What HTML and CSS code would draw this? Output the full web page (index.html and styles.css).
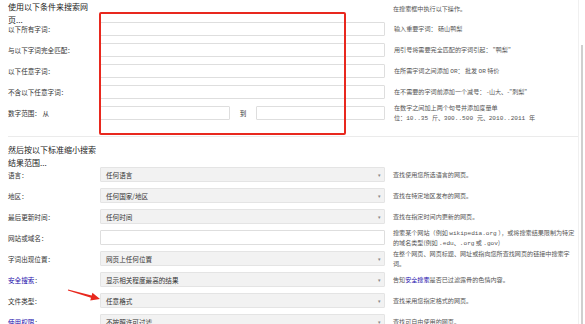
FILE: index.html
```html
<!DOCTYPE html>
<html lang="zh-CN">
<head>
<meta charset="utf-8">
<title>高级搜索</title>
<link rel="stylesheet" href="styles.css">
</head>
<body>
<div class="page">
  <main class="content">
    <section class="block block-terms">
      <div class="block-head">
        <h2 class="block-title">使用以下条件来搜索网页...</h2>
        <div class="head-spacer"></div>
        <div class="hint hint-head">在搜索框中执行以下操作。</div>
      </div>
      <div class="form-grid terms-grid">
        <label class="label">以下所有字词：</label>
        <input class="text-input" type="text">
        <div class="hint hint-item">输入重要字词： 砀山鸭梨</div>

        <label class="label">与以下字词完全匹配：</label>
        <input class="text-input" type="text">
        <div class="hint hint-item">用引号将需要完全匹配的字词引起： "鸭梨"</div>

        <label class="label">以下任意字词：</label>
        <input class="text-input" type="text">
        <div class="hint hint-item">在所需字词之间添加 <span class="mono">OR</span>： 批发 <span class="mono">OR</span> 特价</div>

        <label class="label">不含以下任意字词：</label>
        <input class="text-input" type="text">
        <div class="hint hint-item">在不需要的字词前添加一个减号： -山大、-"刺梨"</div>

        <label class="label">数字范围： 从</label>
        <div class="range">
          <input class="text-input range-from" type="text">
          <span class="range-to">到</span>
          <input class="text-input range-end" type="text">
        </div>
        <div class="hint hint-item">在数字之间加上两个句号并添加度量单<br>位：<span class="mono">10..35 斤、300..500 元、2010..2011 年</span></div>
      </div>
    </section>

    <hr class="divider">

    <section class="block block-narrow">
      <div class="block-head narrow-head">
        <h2 class="block-title">然后按以下标准缩小搜索结果范围...</h2>
      </div>
      <div class="form-grid narrow-grid">
        <label class="label">语言：</label>
        <div class="select"><span>任何语言</span><span class="caret">▾</span></div>
        <div class="hint">查找使用您所选语言的网页。</div>

        <label class="label">地区：</label>
        <div class="select"><span>任何国家/地区</span><span class="caret">▾</span></div>
        <div class="hint">查找在特定地区发布的网页。</div>

        <label class="label">最后更新时间：</label>
        <div class="select"><span>任何时间</span><span class="caret">▾</span></div>
        <div class="hint">查找在指定时间内更新的网页。</div>

        <label class="label">网站或域名：</label>
        <input class="text-input field-input" type="text">
        <div class="hint hint-wrap">搜索某个网站（例如 <span class="mono">wikipedia.org</span> ），或将搜索结果限制为特定的域名类型(例如 <span class="mono">.edu</span>、<span class="mono">.org</span> 或 <span class="mono">.gov</span>)</div>

        <label class="label">字词出现位置：</label>
        <div class="select"><span>网页上任何位置</span><span class="caret">▾</span></div>
        <div class="hint hint-wrap">在整个网页、网页标题、网址或指向您所查找网页的链接中搜索字词。</div>

        <label class="label"><a class="link" href="#">安全搜索</a>：</label>
        <div class="select"><span>显示相关程度最高的结果</span><span class="caret">▾</span></div>
        <div class="hint">告知<a class="link" href="#">安全搜索</a>是否已过滤露骨的色情内容。</div>

        <label class="label">文件类型：</label>
        <div class="select"><span>任意格式</span><span class="caret">▾</span></div>
        <div class="hint">查找采用您指定格式的网页。</div>

        <label class="label"><a class="link" href="#">使用权限</a>：</label>
        <div class="select"><span>不按照许可过滤</span><span class="caret">▾</span></div>
        <div class="hint">查找可自由使用的网页。</div>
      </div>
    </section>
  </main>
  <div class="scrollbar"><div class="scroll-thumb"></div></div>

  <div class="highlight-box"></div>
  <svg class="pointer-arrow" width="45" height="22" viewBox="0 0 45 22">
    <polygon points="8.11,6.61 31.66,12.40 32.41,9.71 40,16 30.25,17.41 31.0,14.72 7.89,7.39" fill="#e8281e"/>
  </svg>
</div>
</body>
</html>
```

FILE: styles.css
```css
* { box-sizing: border-box; }

body {
  margin: 0;
  background: #fff;
  color: #333;
  font-family: "Noto Sans CJK SC", "Noto Sans", sans-serif;
  font-size: 6.6px;
}

.page {
  position: relative;
  display: flex;
  width: 585px;
  height: 324px;
  overflow: hidden;
}

.content {
  flex: 1;
  padding-left: 8px;
  min-width: 0;
}

.scrollbar {
  width: 7px;
  display: flex;
  justify-content: center;
  border-left: 1px solid #f0f0f0;
}

.scroll-thumb {
  width: 2px;
  margin-top: 45px;
  height: 279px;
  background: #cfcfcf;
}

.block-head {
  display: flex;
  height: 22px;
}

.block-title {
  margin: 0;
  width: 92px;
  flex: 0 0 92px;
  font-size: 8px;
  font-weight: normal;
  line-height: 13px;
  color: #222;
}

.head-spacer {
  flex: 0 0 285px;
}

.hint-head {
  padding-left: 2px;
  padding-top: 4px;
  line-height: 12px;
}

.block-terms {
  padding-bottom: 16px;
}

.form-grid {
  display: grid;
  grid-template-columns: 92px 285px 1fr;
  align-items: center;
}

.terms-grid {
  grid-auto-rows: 14px;
  row-gap: 7px;
}

.narrow-grid {
  grid-auto-rows: 15px;
  row-gap: 6px;
}

.label {
  color: #333;
  white-space: nowrap;
}

.text-input {
  display: block;
  width: 100%;
  height: 100%;
  margin: 0;
  padding: 0 4px;
  border: 1px solid #dedede;
  border-radius: 1px;
  background: #fff;
  font: inherit;
  outline: none;
}

.range {
  display: flex;
  align-items: center;
  height: 100%;
}

.range-from {
  flex: 0 0 130px;
  width: 130px;
}

.range-to {
  flex: 0 0 26px;
  text-align: center;
  font-size: 6.6px;
}

.range-end {
  flex: 1;
  width: auto;
}

.hint {
  font-size: 6.1px;
  line-height: 10px;
  color: #555;
  padding-left: 8px;
}

.hint-wrap {
  line-height: 9.5px;
}

.hint-item {
  padding-left: 9px;
}

.mono {
  font-family: "Liberation Mono", "DejaVu Sans Mono", monospace;
  line-height: 1;
}

.divider {
  margin: 0;
  border: 0;
  border-top: 1px solid #ebebeb;
}

.block-narrow {
  padding-top: 6px;
}

.narrow-head {
  height: 24px;
}

.select {
  display: flex;
  align-items: center;
  justify-content: space-between;
  height: 100%;
  padding: 0 3px 0 5px;
  background: #f2f2f2;
  border: 1px solid #e4e4e4;
  border-radius: 1px;
  color: #333;
}

.caret {
  font-size: 5px;
  color: #888;
}

.link {
  color: #1a0dab;
  text-decoration: none;
}

.highlight-box {
  position: absolute;
  left: 99px;
  top: 12px;
  width: 247px;
  height: 123px;
  border: 2px solid #e8281e;
  border-radius: 2px;
  pointer-events: none;
}

.pointer-arrow {
  position: absolute;
  left: 60px;
  top: 283px;
}
```
